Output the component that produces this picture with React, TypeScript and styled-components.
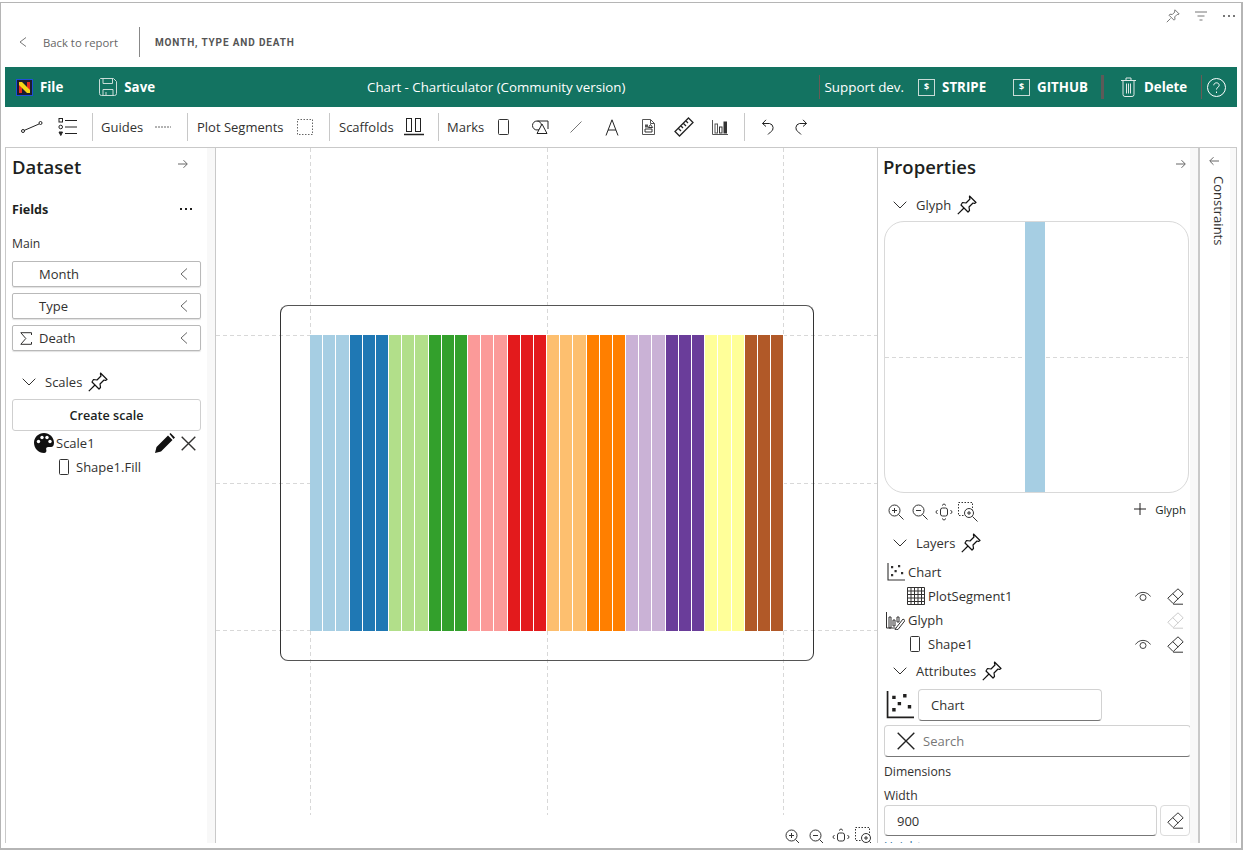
import React from "react";
import styled, { createGlobalStyle } from "styled-components";

const GlobalStyle = createGlobalStyle`
  html, body { margin: 0; padding: 0; background: #fff; overflow: hidden; }
  body { font-family: "Open Sans", "Liberation Sans", sans-serif; color: #201f1e; }
`;

const Frame = styled.div`
  box-sizing: border-box;
  width: 1243px;
  height: 848px;
  margin: 2px 0 0 0;
  border: 1px solid #b5b5b5;
  border-right-width: 2px;
  border-bottom-width: 2px;
  overflow: hidden;
  display: flex;
  flex-direction: column;
`;

const ReportHeader = styled.header`
  height: 64px;
  display: flex;
  flex-direction: column;
`;

const ReportIcons = styled.div`
  height: 22px;
  display: flex;
  justify-content: flex-end;
  align-items: center;
  gap: 14px;
  padding: 2px 5px 0 0;
  color: #777;
`;

const BackRow = styled.div`
  height: 30px;
  display: flex;
  align-items: center;
  padding-left: 18px;
`;

const BackLink = styled.span`
  font-size: 11.3px;
  color: #666;
  margin-left: 16px;
  width: 96px;
  white-space: nowrap;
`;

const BackDivider = styled.span`
  width: 1px;
  height: 30px;
  background: #888;
  margin-right: 15px;
`;

const ReportTitle = styled.span`
  font-family: "Roboto", sans-serif;
  font-size: 10px;
  font-weight: 700;
  letter-spacing: 0.85px;
  color: #555;
`;

const GreenBar = styled.div`
  height: 40px;
  margin: 0 4px;
  background: #137361;
  display: flex;
  align-items: center;
  color: #fff;
  font-size: 13.3px;
`;

const BarAction = styled.span<{ $left: number }>`
  display: inline-flex;
  align-items: center;
  gap: 7px;
  font-weight: 700;
  font-size: 13.3px;
  margin-left: ${(p) => p.$left}px;
  white-space: nowrap;
`;

const BarTitle = styled.span`
  margin-left: 212px;
  white-space: nowrap;
`;

const BarRule = styled.span<{ $w?: number; $color?: string; $left: number }>`
  width: ${(p) => p.$w ?? 1}px;
  height: 24px;
  background: ${(p) => p.$color ?? "#6a5a55"};
  margin-left: ${(p) => p.$left}px;
`;

const SupportLabel = styled.span`
  margin-left: 4px;
  font-size: 13.4px;
  white-space: nowrap;
`;

const BarIconTint = styled.span<{ $color?: string }>`
  color: ${(p) => p.$color ?? "#c9dcd7"};
  display: flex;
`;

const Toolbar = styled.div`
  height: 40px;
  display: flex;
  align-items: center;
  padding-left: 13px;
  flex-shrink: 0;
`;

const ToolBox = styled.span<{ $w?: number; $left?: number }>`
  width: ${(p) => p.$w ?? 36}px;
  height: 36px;
  margin-left: ${(p) => p.$left ?? 0}px;
  display: inline-flex;
  align-items: center;
  justify-content: center;
  color: #222;
  flex-shrink: 0;
`;

const ToolRule = styled.span<{ $left: number }>`
  width: 1px;
  height: 28px;
  background: #c8c8c8;
  margin-left: ${(p) => p.$left}px;
`;

const ToolLabel = styled.span<{ $w: number; $left?: number }>`
  width: ${(p) => p.$w}px;
  margin-left: ${(p) => p.$left ?? 8}px;
  font-size: 13px;
  color: #323130;
  white-space: nowrap;
`;

const Workspace = styled.div`
  flex: 1;
  min-height: 0;
  display: flex;
  margin: 0 4px 5px 4px;
  border-top: 1px solid #c9c9c9;
`;

const DatasetPanel = styled.aside`
  box-sizing: border-box;
  width: 202px;
  flex-shrink: 0;
  border-left: 1px solid #c9c9c9;
  padding: 0 6px;
  overflow: hidden;
`;

const PropertiesPanel = styled.aside`
  box-sizing: border-box;
  width: 312px;
  flex-shrink: 0;
  padding-left: 6px;
  overflow: hidden;
`;

const ScrollTrack = styled.div`
  width: 8px;
  flex-shrink: 0;
  background: #f8f8f8;
`;

const PanelHead = styled.div<{ $inset?: number; $end: number }>`
  height: 36px;
  margin-left: ${(p) => p.$inset ?? 0}px;
  display: flex;
  justify-content: space-between;
  align-items: center;
  padding-right: ${(p) => p.$end}px;
`;

const PanelTitle = styled.h2`
  margin: 0;
  font-size: 18.5px;
  font-weight: 600;
  color: #201f1e;
`;

const FieldsHead = styled.div`
  display: flex;
  justify-content: space-between;
  align-items: center;
  height: 20px;
  margin-top: 15px;
  padding-right: 9px;
  font-size: 12.6px;
  font-weight: 700;
`;

const SmallLabel = styled.div<{ $top: number; $link?: boolean }>`
  font-size: 12.2px;
  line-height: 18px;
  margin-top: ${(p) => p.$top}px;
  color: ${(p) => (p.$link ? "#2b6f9e" : "#323130")};
`;

const FieldList = styled.div`
  display: flex;
  flex-direction: column;
  gap: 6px;
  margin-top: 8px;
`;

const FieldButton = styled.div`
  box-sizing: border-box;
  width: 189px;
  height: 26px;
  border: 1px solid #b9b9b9;
  border-radius: 2px;
  box-shadow: 0 1px 1px rgba(0, 0, 0, 0.12);
  display: grid;
  grid-template-columns: 26px 1fr 33px;
  align-items: center;
  justify-items: start;
  font-size: 13px;
  color: #323130;
`;

const FieldGlyph = styled.span`
  display: flex;
  justify-self: center;
`;

const FieldChevron = styled.span`
  display: flex;
  justify-self: center;
  color: #666;
`;

const SectionHead = styled.div<{ $top: number; $left: number }>`
  display: flex;
  align-items: center;
  height: 24px;
  margin-top: ${(p) => p.$top}px;
  padding-left: ${(p) => p.$left}px;
  font-size: 13px;
  color: #323130;
`;

const SectionLabel = styled.span`
  margin: 0 6px 0 9px;
`;

const CreateButton = styled.div`
  box-sizing: border-box;
  width: 189px;
  height: 32px;
  margin-top: 5px;
  border: 1px solid #cfcfcf;
  border-radius: 3px;
  display: flex;
  justify-content: center;
  align-items: center;
  font-size: 12.6px;
  font-weight: 600;
`;

const TreeRow = styled.div<{ $indent: number; $top?: number }>`
  height: 24px;
  margin-top: ${(p) => p.$top ?? 0}px;
  display: flex;
  align-items: center;
  padding-left: ${(p) => p.$indent}px;
  font-size: 13px;
  color: #323130;
  white-space: nowrap;
`;

const TreeLabel = styled.span<{ $gap?: number }>`
  flex: 1;
  margin-left: ${(p) => p.$gap ?? 3}px;
`;

const RowAction = styled.span<{ $w: number }>`
  width: ${(p) => p.$w}px;
  display: flex;
  justify-content: center;
  flex-shrink: 0;
`;

const CanvasArea = styled.main`
  box-sizing: border-box;
  width: 663px;
  flex-shrink: 0;
  position: relative;
  border-left: 1px solid #c9c9c9;
  border-right: 1px solid #c9c9c9;
  overflow: hidden;
  background: #fff;
`;

const GuideV = styled.div<{ $x: number }>`
  position: absolute;
  top: 0;
  height: 667px;
  width: 1px;
  left: ${(p) => p.$x}px;
  background: repeating-linear-gradient(to bottom, #d8d8d8 0 4px, transparent 4px 7px);
`;

const GuideH = styled.div<{ $y: number }>`
  position: absolute;
  left: 0;
  right: 0;
  height: 1px;
  top: ${(p) => p.$y}px;
  background: repeating-linear-gradient(to right, #d8d8d8 0 4px, transparent 4px 7px);
`;

const ChartFrame = styled.div`
  position: absolute;
  left: 64px;
  top: 157px;
  width: 534px;
  height: 356px;
  box-sizing: border-box;
  border: 1px solid #333;
  border-top-color: #555;
  border-bottom-color: #555;
  border-radius: 8px;
`;

const Plot = styled.div`
  position: absolute;
  left: 94px;
  top: 187px;
  width: 474px;
  height: 296px;
  display: flex;
`;

const Bar = styled.div<{ $color: string }>`
  flex: 1;
  box-sizing: border-box;
  background: ${(p) => p.$color};
  border-right: 1px solid #fff;
`;

const ZoomBar = styled.div`
  display: flex;
  align-items: center;
  color: #333;
`;

const CanvasZoom = styled(ZoomBar)`
  position: absolute;
  right: 0;
  bottom: -4px;
`;

const ZoomSlot = styled.span`
  width: 24px;
  display: flex;
  justify-content: center;
`;

const GlyphView = styled.div`
  box-sizing: border-box;
  width: 305px;
  height: 272px;
  margin-top: 4px;
  border: 1px solid #d9d9d9;
  border-radius: 20px;
  position: relative;
  overflow: hidden;
`;

const GlyphBar = styled.div`
  position: absolute;
  left: 140px;
  top: 0;
  bottom: 0;
  width: 20px;
  background: #a6cee3;
`;

const GlyphGuide = styled.div`
  position: absolute;
  left: 0;
  right: 0;
  height: 1px;
  top: 135px;
  background: repeating-linear-gradient(to right, #d8d8d8 0 4px, transparent 4px 7px);
`;

const GlyphTools = styled.div`
  display: flex;
  justify-content: space-between;
  align-items: center;
  height: 30px;
  width: 302px;
  margin-top: 4px;
`;

const AddGlyph = styled.span`
  display: flex;
  align-items: center;
  gap: 9px;
  font-size: 11.4px;
  padding-bottom: 6px;
`;

const ChartPicker = styled.div`
  display: flex;
  align-items: center;
  gap: 4px;
  margin-top: 6px;
  padding-left: 2px;
`;

const TextInput = styled.div<{ $w: number; $h: number; $muted?: boolean }>`
  box-sizing: border-box;
  width: ${(p) => p.$w}px;
  height: ${(p) => p.$h}px;
  flex-shrink: 0;
  border: 1px solid #d2d2d2;
  border-bottom: 1px solid #777;
  border-radius: 4px;
  display: flex;
  align-items: center;
  padding-left: 12px;
  gap: 8px;
  font-size: 13px;
  color: ${(p) => (p.$muted ? "#777" : "#323130")};
`;

const SearchCross = styled.span`
  color: #222;
  display: flex;
`;

const SearchRow = styled.div`
  margin-top: 4px;
`;

const InputRow = styled.div`
  display: flex;
  gap: 3px;
`;

const SquareButton = styled.div`
  box-sizing: border-box;
  width: 30px;
  height: 31px;
  border: 1px solid #dcdcdc;
  border-radius: 4px;
  display: flex;
  justify-content: center;
  align-items: center;
`;

const ConstraintsPanel = styled.aside`
  box-sizing: border-box;
  flex: 1;
  border-left: 2px solid #c9c9c9;
  border-right: 1px solid #c9c9c9;
  display: flex;
  flex-direction: column;
  align-items: flex-start;
  padding-left: 9px;
  background: linear-gradient(to right, #fff 30px, #f9f9f9 30px);
`;

const ConstraintsText = styled.span`
  writing-mode: vertical-rl;
  font-size: 13px;
  margin: 10px 0 0 1px;
  color: #323130;
`;

const ArrowSlot = styled.span`
  margin-top: 8px;
  color: #666;
  display: flex;
`;

const TintIcon = styled.span<{ $color: string; $lift?: number }>`
  color: ${(p) => p.$color};
  display: flex;
  margin-bottom: ${(p) => p.$lift ?? 0}px;
`;

const Icon = ({ size = 16, w, h, sw = 1, children, vb }: { size?: number; w?: number; h?: number; sw?: number; vb?: string; children: React.ReactNode }) => (
  <svg width={w ?? size} height={h ?? size} viewBox={vb ?? `0 0 ${w ?? size} ${h ?? size}`} fill="none" stroke="currentColor" strokeWidth={sw}>
    {children}
  </svg>
);

const Chevron = () => (
  <Icon w={14} h={8}>
    <path d="M.7.7 7 7 13.300.7" />
  </Icon>
);

const ChevronLeft = ({ h = 12 }: { h?: number }) => (
  <Icon w={8} h={h}>
    <path d={`M7 .5 1 ${h / 2} 7 ${h - 0.5}`} />
  </Icon>
);

const Pin = () => (
  <TintIcon $color="#111">
    <Icon size={20} sw={1.2}>
      <path d="M12.500 1 19 7.500l-1.500 1-1.500-.5-4 4 .5 3.500-1.500 1.500-7-7L5.500 7.500l3.500.5 4-4-.5-1.500z" strokeLinejoin="round" />
      <path d="M7 13 .8 19.200" />
    </Icon>
  </TintIcon>
);

const Eraser = ({ muted }: { muted?: boolean }) => (
  <TintIcon $color={muted ? "#ccc" : "#333"}>
    <Icon size={17}>
      <path d="M.8 10.200 11 .8l5.200 5L6.200 15.600zM5.700 5.600l5.500 5.400M6.200 16.200H16" strokeLinejoin="round" />
    </Icon>
  </TintIcon>
);

const Eye = () => (
  <TintIcon $color="#444">
    <Icon w={16} h={12}>
      <path d="M.5 6.500C4 1 12 1 15.500 6.500" />
      <circle cx="8" cy="7.500" r="3" />
    </Icon>
  </TintIcon>
);

const ArrowRight = () => (
  <TintIcon $color="#666" $lift={4}>
    <Icon w={10} h={10}>
      <path d="M0 5h9M5.500 1.200 9.300 5 5.500 8.800" />
    </Icon>
  </TintIcon>
);

const Rect = ({ w = 9, h = 15 }: { w?: number; h?: number }) => (
  <Icon w={w + 2} h={h + 2}>
    <rect x=".5" y=".5" width={w} height={h} rx="1" stroke="#333" />
  </Icon>
);

const Cross = ({ size = 15, sw = 1.4 }: { size?: number; sw?: number }) => (
  <Icon size={size} sw={sw}>
    <path d={`M.7.7 ${size - 0.7} ${size - 0.7}M${size - 0.7}.7 .7 ${size - 0.7}`} />
  </Icon>
);

const DollarBox = () => (
  <BarIconTint>
    <svg width="17" height="17" viewBox="0 0 17 17" fill="none" stroke="currentColor">
      <rect x=".5" y=".5" width="16" height="16" />
      <text x="8.500" y="10.500" fontSize="9" fontWeight="700" textAnchor="middle" fill="#fff" stroke="none">$</text>
    </svg>
  </BarIconTint>
);

const ZoomInIcon = () => (
  <Icon size={16}>
    <circle cx="6.500" cy="6.500" r="5.500" />
    <path d="m10.500 10.500 5 5M4 6.500h5M6.500 4v5" />
  </Icon>
);

const ZoomOutIcon = () => (
  <Icon size={16}>
    <circle cx="6.500" cy="6.500" r="5.500" />
    <path d="m10.500 10.500 5 5M4 6.500h5" />
  </Icon>
);

const FitIcon = () => (
  <Icon size={18}>
    <rect x="5.500" y="5" width="7" height="8" rx="2" />
    <path d="M7 2.500 9 .8l2 1.700M7 15.500l2 1.700 2-1.700M2.500 7 .8 9l1.700 2M15.500 7l1.700 2-1.700 2" />
  </Icon>
);

const ZoomAreaIcon = () => (
  <Icon size={20}>
    <rect x=".5" y=".5" width="14" height="13" strokeDasharray="1.500 1.500" />
    <circle cx="11" cy="11" r="4.500" fill="#fff" />
    <path d="m14.500 14.500 5 5M9 11h4M11 9v4" />
  </Icon>
);

const ZoomSlots = () => (
  <>
    <ZoomSlot><ZoomInIcon /></ZoomSlot>
    <ZoomSlot><ZoomOutIcon /></ZoomSlot>
    <ZoomSlot><FitIcon /></ZoomSlot>
    <ZoomSlot><ZoomAreaIcon /></ZoomSlot>
  </>
);

const ChartIcon = ({ size = 18 }: { size?: number }) => (
  <Icon w={size} h={size} vb="0 0 18 18" sw={1.1}>
    <path d="M1 0v17h17" />
    <path d="M4 3h2.200v2.200H4zM11 2h2.200v2.200H11zM7.500 7h2.200v2.200H7.500zM4 11h2.200v2.200H4zM14 9h2.200v2.200H14z" fill="currentColor" stroke="none" />
  </Icon>
);

const colors = ["#a6cee3", "#1f78b4", "#b2df8a", "#33a02c", "#fb9a99", "#e31a1c", "#fdbf6f", "#ff7f00", "#cab2d6", "#6a3d9a", "#ffff99", "#b15928"];

export default function App() {
  return (
    <>
      <GlobalStyle />
      <Frame>
        <ReportHeader>
          <ReportIcons>
            <Icon size={14}>
              <path d="M9 .8 13.200 5l-1 .6-1-.2-2.500 2.500.3 2.300-1 1-5-5 1-1 2.300.3L8.800 3l-.2-1zM4.500 9.500.8 13.200" strokeLinejoin="round" />
            </Icon>
            <Icon size={14}>
              <path d="M1 3h12M3.500 7h7M5.500 11h3" />
            </Icon>
            <Icon size={14}>
              <path d="M1 7h2M6 7h2M11 7h2" strokeWidth={2} />
            </Icon>
          </ReportIcons>
          <BackRow>
            <TintIcon $color="#777"><ChevronLeft h={10} /></TintIcon>
            <BackLink>Back to report</BackLink>
            <BackDivider />
            <ReportTitle>MONTH, TYPE AND DEATH</ReportTitle>
          </BackRow>
        </ReportHeader>

        <GreenBar>
          <BarAction $left={11}>
            <svg width="17" height="17" viewBox="0 0 17 17">
              <rect x=".5" y=".5" width="16" height="16" fill="#1c1c2e" stroke="#1f4fd8" />
              <path d="M3 6h3v8H3zM11 3h3v9h-3z" fill="#e52b1e" />
              <path d="M3 3h3l8 8v3h-3L3 6z" fill="#f6d716" />
            </svg>
            File
          </BarAction>
          <BarAction $left={36}>
            <BarIconTint>
              <Icon size={18}>
                <path d="M1.500.5h13l3 3v12a2 2 0 0 1-2 2h-13a2 2 0 0 1-2-2v-14zM4 .5v5h9.500v-5M4 17.500v-6h10v6M7 14v3.500" />
              </Icon>
            </BarIconTint>
            Save
          </BarAction>
          <BarTitle>Chart - Charticulator (Community version)</BarTitle>
          <BarRule $left={194} />
          <SupportLabel>Support dev.</SupportLabel>
          <BarAction $left={14}>
            <DollarBox />
            STRIPE
          </BarAction>
          <BarAction $left={27}>
            <DollarBox />
            GITHUB
          </BarAction>
          <BarRule $left={13} $w={3} $color="#5d5a58" />
          <BarAction $left={16}>
            <BarIconTint $color="#dfe9e6">
              <Icon w={17} h={20}>
                <path d="M1 3.500h15M6 3.500V1h5v2.500M3 3.500v14a2 2 0 0 0 2 2h7a2 2 0 0 0 2-2v-14M6.500 6.500v10M8.500 6.500v10M10.500 6.500v10" />
              </Icon>
            </BarIconTint>
            Delete
          </BarAction>
          <BarRule $left={14} />
          <ToolBox $w={19} $left={5}>
            <BarIconTint $color="#fff">
              <Icon size={19}>
                <circle cx="9.500" cy="9.500" r="9" />
                <path d="M6.800 7.300c0-3.300 5.400-3.300 5.400 0 0 2-2.700 2-2.700 4.200M9.500 13.500v1.500" />
              </Icon>
            </BarIconTint>
          </ToolBox>
        </GreenBar>

        <Toolbar>
          <ToolBox>
            <Icon w={22} h={12}>
              <path d="m3 9.500 15-6.500" />
              <circle cx="2" cy="10" r="1.500" />
              <circle cx="19.500" cy="2" r="1.500" />
            </Icon>
          </ToolBox>
          <ToolBox>
            <Icon w={20} h={20}>
              <rect x="1" y="1.500" width="3.500" height="3.500" />
              <circle cx="2.700" cy="10" r="1.800" />
              <path d="M1 15h3.500l-1.700 3.500z" fill="currentColor" />
              <path d="M7 3.500h12M7 10h12M7 16.500h12" />
            </Icon>
          </ToolBox>
          <ToolRule $left={6} />
          <ToolLabel $w={44}>Guides</ToolLabel>
          <ToolBox>
            <Icon w={16} h={4}>
              <path d="M0 2h16" strokeDasharray="2 1" stroke="#666" />
            </Icon>
          </ToolBox>
          <ToolRule $left={6} />
          <ToolLabel $w={90} $left={9}>Plot Segments</ToolLabel>
          <ToolBox>
            <Icon size={16}>
              <rect x=".5" y=".5" width="15" height="15" strokeDasharray="1.500 1.500" stroke="#666" />
            </Icon>
          </ToolBox>
          <ToolRule $left={6} />
          <ToolLabel $w={57} $left={9}>Scaffolds</ToolLabel>
          <ToolBox>
            <Icon w={20} h={18}>
              <rect x="2.500" y=".5" width="5" height="13" />
              <rect x="11.500" y=".5" width="5" height="13" />
              <path d="M0 16.500h20" strokeWidth={1.5} />
            </Icon>
          </ToolBox>
          <ToolRule $left={6} />
          <ToolLabel $w={39}>Marks</ToolLabel>
          <ToolBox><Rect w={10} h={15} /></ToolBox>
          <ToolBox>
            <Icon w={17} h={14}>
              <circle cx="5" cy="5.500" r="4.500" />
              <path d="M5.500 1h10.500v8" />
              <path d="m10 4 5 9.500H5z" fill="#fff" />
            </Icon>
          </ToolBox>
          <ToolBox>
            <TintIcon $color="#777">
              <Icon size={12}><path d="M.5 11.500 11.500.5" /></Icon>
            </TintIcon>
          </ToolBox>
          <ToolBox>
            <Icon w={14} h={17}>
              <path d="M1 16.500 7 .8l6 15.700M3 11h8" />
            </Icon>
          </ToolBox>
          <ToolBox>
            <Icon w={13} h={16}>
              <path d="M.5.500h8l4 4v11H.5zM8.500.500v4h4" stroke="#555" />
              <rect x="3" y="5.500" width="3" height="3" fill="#555" stroke="none" />
              <path d="m8.500 5.500 2.200 3H6.300zM3 10h7v3H3z" stroke="#333" />
            </Icon>
          </ToolBox>
          <ToolBox>
            <Icon size={20} sw={1.3}>
              <path d="M14.500 1 19 5.500 5.500 19 1 14.500zM12 4l2 2M9.500 6.500 12 9M7 9l2 2M4.500 11.500 7 14" />
            </Icon>
          </ToolBox>
          <ToolBox>
            <Icon w={16} h={15}>
              <path d="M.5 0v14.500H16" stroke="#555" />
              <rect x="3" y="4" width="2.500" height="9" stroke="#555" />
              <rect x="7.500" y="7" width="2.500" height="6" stroke="#333" />
              <rect x="12" y="2" width="2.500" height="11" fill="#333" stroke="#333" />
            </Icon>
          </ToolBox>
          <ToolRule $left={6} />
          <ToolBox $w={33} $left={6}>
            <Icon w={14} h={16}>
              <path d="M5 .8 1.500 4.500 5 7.500M1.500 4.500h7a4.500 4.500 0 0 1 1 8.500L7 15.500" />
            </Icon>
          </ToolBox>
          <ToolBox $w={33}>
            <Icon w={14} h={16}>
              <path d="M9 .8l3.500 3.700L9 7.500M12.500 4.500h-7a4.500 4.500 0 0 0-1 8.500L7 15.500" />
            </Icon>
          </ToolBox>
        </Toolbar>

        <Workspace>
          <DatasetPanel>
            <PanelHead $end={13}>
              <PanelTitle>Dataset</PanelTitle>
              <ArrowRight />
            </PanelHead>
            <FieldsHead>
              Fields
              <Icon w={12} h={4}>
                <path d="M0 2h2M5 2h2M10 2h2" strokeWidth={2} />
              </Icon>
            </FieldsHead>
            <SmallLabel $top={16}>Main</SmallLabel>
            <FieldList>
              <FieldButton><span />Month<FieldChevron><ChevronLeft /></FieldChevron></FieldButton>
              <FieldButton><span />Type<FieldChevron><ChevronLeft /></FieldChevron></FieldButton>
              <FieldButton>
                <FieldGlyph>
                  <Icon w={12} h={13}>
                    <path d="M11.500 3V.7H.8l5 5.800-5 5.800h10.700V10" />
                  </Icon>
                </FieldGlyph>
                Death
                <FieldChevron><ChevronLeft /></FieldChevron>
              </FieldButton>
            </FieldList>
            <SectionHead $top={19} $left={10}>
              <Chevron />
              <SectionLabel>Scales</SectionLabel>
              <Pin />
            </SectionHead>
            <CreateButton>Create scale</CreateButton>
            <TreeRow $indent={22}>
              <svg width="20" height="20" viewBox="0 0 20 20">
                <path d="M10 0C4.500 0 0 4.300 0 9.700S4.500 20 10 20c2 0 2.800-1.500 2.300-3-.6-1.700.3-3 2-3H17c1.800 0 3-1.500 3-4.300C20 4.300 15.500 0 10 0z" fill="#111" />
                <circle cx="4.500" cy="8.500" r="1.700" fill="#fff" />
                <circle cx="8" cy="4.500" r="1.700" fill="#fff" />
                <circle cx="13" cy="4.500" r="1.700" fill="#fff" />
                <circle cx="16" cy="8.500" r="1.700" fill="#fff" />
              </svg>
              <TreeLabel $gap={2}>Scale1</TreeLabel>
              <RowAction $w={20}>
                <svg width="20" height="20" viewBox="0 0 20 20">
                  <path d="M0 20l1.500-6L13 2.500 17.500 7 6 18.500zM14.500 1l1-1 4.500 4.500-1.500 1.500z" fill="#111" />
                </svg>
              </RowAction>
              <RowAction $w={26}><Cross size={15} /></RowAction>
            </TreeRow>
            <TreeRow $indent={47}>
              <Rect w={9} h={15} />
              <TreeLabel $gap={6}>Shape1.Fill</TreeLabel>
            </TreeRow>
          </DatasetPanel>
          <ScrollTrack />

          <CanvasArea>
            <GuideV $x={94} />
            <GuideV $x={331} />
            <GuideV $x={567} />
            <GuideH $y={187} />
            <GuideH $y={335} />
            <GuideH $y={482} />
            <ChartFrame />
            <Plot>
              {colors.flatMap((color) =>
                [0, 1, 2].map((i) => <Bar key={color + i} $color={color} />)
              )}
            </Plot>
            <CanvasZoom><ZoomSlots /></CanvasZoom>
          </CanvasArea>

          <PropertiesPanel>
            <PanelHead $inset={-1} $end={4}>
              <PanelTitle>Properties</PanelTitle>
              <ArrowRight />
            </PanelHead>
            <SectionHead $top={9} $left={9}>
              <Chevron />
              <SectionLabel>Glyph</SectionLabel>
              <Pin />
            </SectionHead>
            <GlyphView>
              <GlyphGuide />
              <GlyphBar />
            </GlyphView>
            <GlyphTools>
              <ZoomBar><ZoomSlots /></ZoomBar>
              <AddGlyph>
                <Icon size={12}><path d="M6 0v12M0 6h12" /></Icon>
                Glyph
              </AddGlyph>
            </GlyphTools>
            <SectionHead $top={4} $left={9}>
              <Chevron />
              <SectionLabel>Layers</SectionLabel>
              <Pin />
            </SectionHead>
            <TreeRow $indent={3} $top={5}>
              <ChartIcon />
              <TreeLabel>Chart</TreeLabel>
            </TreeRow>
            <TreeRow $indent={23}>
              <Icon size={18}>
                <path d="M.5.500h17v17H.5zM.5 4h17M.5 7.500h17M.5 11h17M.5 14.500h17M4 .5v17M7.500.500v17M11 .5v17M14.500.500v17" />
              </Icon>
              <TreeLabel>PlotSegment1</TreeLabel>
              <RowAction $w={34}><Eye /></RowAction>
              <RowAction $w={30}><Eraser /></RowAction>
            </TreeRow>
            <TreeRow $indent={2}>
              <Icon size={19}>
                <path d="M.5 1v16h9M3 6h2v11H3zM7 9h2v6H7zM11 6h2v5h-2z" />
                <path d="m10 17 7-9 2 1.500-7 9-3 .5z" />
              </Icon>
              <TreeLabel $gap={3}>Glyph</TreeLabel>
              <RowAction $w={30}><Eraser muted /></RowAction>
            </TreeRow>
            <TreeRow $indent={26}>
              <Rect w={9} h={15} />
              <TreeLabel $gap={7}>Shape1</TreeLabel>
              <RowAction $w={34}><Eye /></RowAction>
              <RowAction $w={30}><Eraser /></RowAction>
            </TreeRow>
            <SectionHead $top={3} $left={9}>
              <Chevron />
              <SectionLabel>Attributes</SectionLabel>
              <Pin />
            </SectionHead>
            <ChartPicker>
              <ChartIcon size={28} />
              <TextInput $w={184} $h={32}>Chart</TextInput>
            </ChartPicker>
            <SearchRow>
              <TextInput $w={307} $h={32} $muted>
                <SearchCross><Cross size={18} sw={1.4} /></SearchCross>
                Search
              </TextInput>
            </SearchRow>
            <SmallLabel $top={6}>Dimensions</SmallLabel>
            <SmallLabel $top={6}>Width</SmallLabel>
            <InputRow>
              <TextInput $w={273} $h={31}>900</TextInput>
              <SquareButton><Eraser /></SquareButton>
            </InputRow>
            <SmallLabel $top={2} $link>Height</SmallLabel>
          </PropertiesPanel>
          <ScrollTrack />

          <ConstraintsPanel>
            <ArrowSlot>
              <Icon w={10} h={10}>
                <path d="M10 5H1M4.500 1.200.7 5l3.800 3.800" />
              </Icon>
            </ArrowSlot>
            <ConstraintsText>Constraints</ConstraintsText>
          </ConstraintsPanel>
        </Workspace>
      </Frame>
    </>
  );
}
